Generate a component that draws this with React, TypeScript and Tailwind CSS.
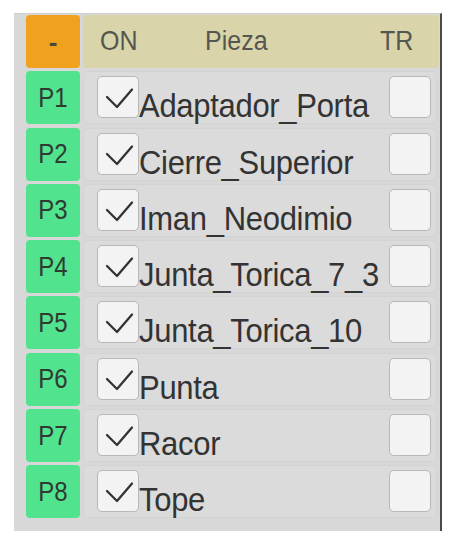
import React from "react";

const parts = [
  "Adaptador_Porta",
  "Cierre_Superior",
  "Iman_Neodimio",
  "Junta_Torica_7_3",
  "Junta_Torica_10",
  "Punta",
  "Racor",
  "Tope",
];

function Check({ on }: { on: boolean }) {
  return (
    <span className="grid h-[42px] w-[42px] shrink-0 place-items-center rounded-[5px] border border-[#b8b8b8] bg-[#f3f3f3]">
      {on && (
        <svg width="42" height="42" viewBox="0 0 42 42" fill="none">
          <path d="M9 20 L19 30 L34 12.5" stroke="#333" strokeWidth="2.3" strokeLinecap="round" strokeLinejoin="round" />
        </svg>
      )}
    </span>
  );
}

export default function App() {
  return (
    <div className="h-[550px] w-[459px] bg-white pt-[13px] pl-[14px]" style={{ fontFamily: '"Liberation Sans", Arial, sans-serif' }}>
      <div className="flex h-[518px] w-[428px] flex-col gap-[3.3px] border-t border-r-2 border-t-[#cfcfcf] border-r-[#4a4a4a] bg-[#d8d8d8] pt-[1px] pr-px pl-[12px]">
        {/* header */}
        <div className="flex h-[53px] gap-[3px]">
          <div className="grid w-[54px] place-items-center rounded-[4px] bg-[#f0a21e] text-[26px] font-bold leading-none text-[#4a4a3a]">
            -
          </div>
          <div className="relative flex-1 rounded-[4px] bg-[#d9d4a9] text-[25px] leading-none text-[#565650]">
            <span className="absolute top-[14px] left-[17px] inline-block origin-bottom scale-y-110">ON</span>
            <span className="absolute top-[14px] left-[122px] inline-block origin-bottom scale-y-110">Pieza</span>
            <span className="absolute top-[14px] left-[297px] inline-block origin-bottom scale-y-110">TR</span>
          </div>
        </div>

        {parts.map((p, i) => (
          <div key={p} className="flex h-[53px] gap-[3px]">
            <div className="grid w-[54px] place-items-center rounded-[4px] bg-[#52e38e] text-[24px] leading-none text-[#2f3a33]">
              <span className="inline-block scale-y-115">P{i + 1}</span>
            </div>
            <div className="mr-[2px] flex flex-1 items-start rounded-[5px] border border-[#d3d3d3] bg-[#dbdbdb] pt-[4px] pl-[13px] pr-[5px]">
              <Check on />
              <span className="mt-[16px] inline-block origin-bottom scale-y-110 whitespace-nowrap text-[31px] leading-[31px] tracking-[-0.3px] text-[#333]">{p}</span>
              <span className="ml-auto">
                <Check on={false} />
              </span>
            </div>
          </div>
        ))}
      </div>
    </div>
  );
}
